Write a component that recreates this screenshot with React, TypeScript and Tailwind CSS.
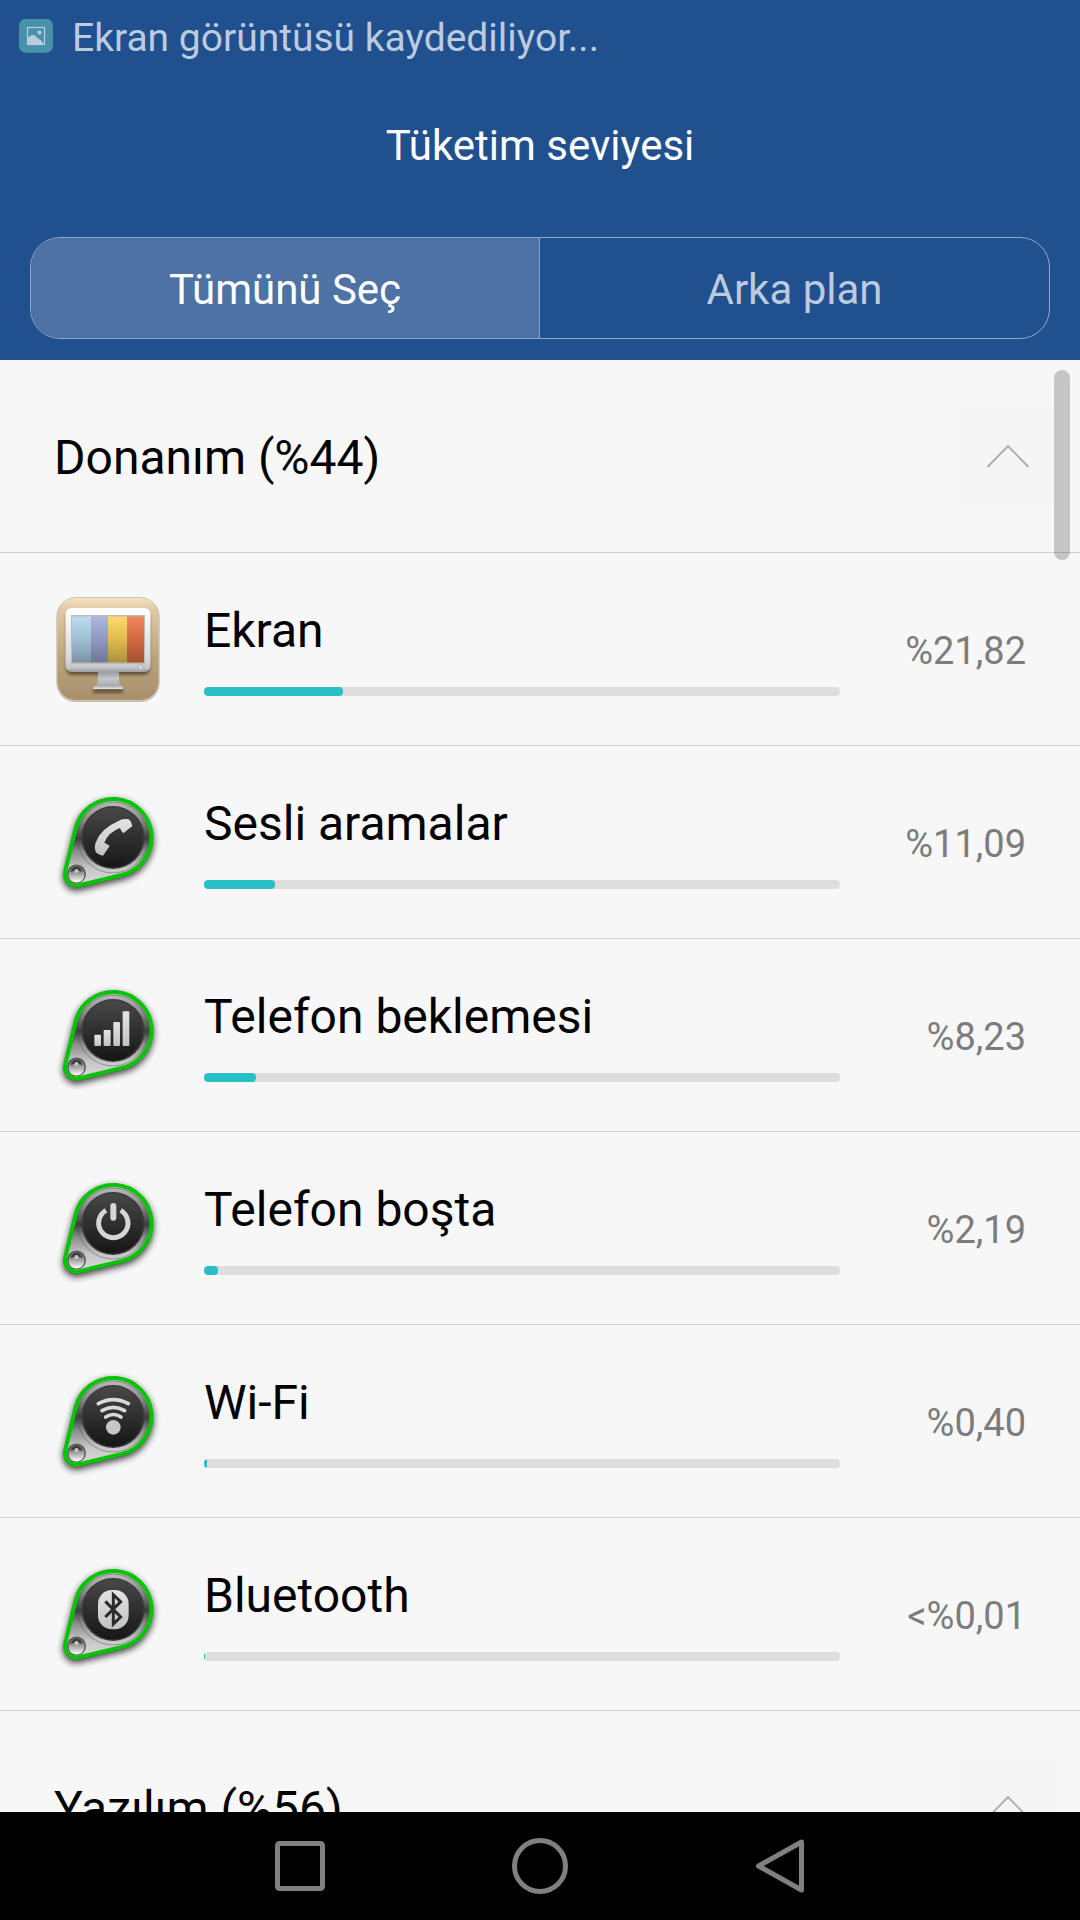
import React, { useState } from "react";

type Glyph = "screen" | "phone" | "signal" | "power" | "wifi" | "bluetooth";

interface Item {
  icon: Glyph;
  label: string;
  value: string;
  percent: number;
}

const items: Item[] = [
  { icon: "screen", label: "Ekran", value: "%21,82", percent: 21.82 },
  { icon: "phone", label: "Sesli aramalar", value: "%11,09", percent: 11.09 },
  { icon: "signal", label: "Telefon beklemesi", value: "%8,23", percent: 8.23 },
  { icon: "power", label: "Telefon boşta", value: "%2,19", percent: 2.19 },
  { icon: "wifi", label: "Wi-Fi", value: "%0,40", percent: 0.4 },
  { icon: "bluetooth", label: "Bluetooth", value: "<%0,01", percent: 0.01 },
];

function ScreenIcon() {
  return (
    <svg viewBox="0 0 104 104" className="size-[104px] shrink-0 overflow-visible" aria-hidden="true">
      <defs>
        <linearGradient id="tan" x1="0" y1="0" x2="0" y2="1">
          <stop offset="0" stopColor="#f6e4c0" />
          <stop offset="0.12" stopColor="#dfcaa4" />
          <stop offset="0.6" stopColor="#baa27c" />
          <stop offset="1" stopColor="#a8906b" />
        </linearGradient>
        <linearGradient id="frame" x1="0" y1="0" x2="0" y2="1">
          <stop offset="0" stopColor="#ffffff" />
          <stop offset="0.8" stopColor="#d6d7da" />
          <stop offset="0.93" stopColor="#c4c5c8" />
          <stop offset="1" stopColor="#9c9da0" />
        </linearGradient>
        <linearGradient id="shade" x1="0" y1="0" x2="0" y2="1">
          <stop offset="0" stopColor="#fff" stopOpacity="0.12" />
          <stop offset="0.5" stopColor="#000" stopOpacity="0.12" />
          <stop offset="1" stopColor="#000" stopOpacity="0.32" />
        </linearGradient>
        <linearGradient id="stand" x1="0" y1="0" x2="0" y2="1">
          <stop offset="0" stopColor="#9a9b9e" />
          <stop offset="0.4" stopColor="#c6c7ca" />
          <stop offset="0.8" stopColor="#a9aaad" />
          <stop offset="1" stopColor="#e6e6e8" />
        </linearGradient>
        <filter id="soft" x="-20%" y="-20%" width="140%" height="150%">
          <feGaussianBlur stdDeviation="1.5" />
        </filter>
      </defs>
      <rect x="0.5" y="1" width="103" height="104" rx="19" fill="#9b9487" opacity="0.6" />
      <rect x="1" y="0.5" width="102" height="103" rx="19" fill="url(#tan)" stroke="#cfc5b3" strokeWidth="1" />
      <rect x="10" y="15" width="84" height="63" rx="6" fill="#4b3e2b" opacity="0.75" filter="url(#soft)" />
      <path d="M37 92h30v4H37z" fill="#4b3e2b" opacity="0.75" filter="url(#soft)" />
      <path d="M42 75h21v8q0 4 4 7v2H37v-2q5-3 5-7z" fill="url(#stand)" />
      <rect x="9.500" y="11" width="85" height="64" rx="6" fill="url(#frame)" />
      <rect x="15" y="18" width="74" height="49" fill="#b9bbbf" />
      <rect x="16" y="19.500" width="19" height="46" fill="#b4d8ee" />
      <rect x="35" y="19.500" width="17" height="46" fill="#a3addb" />
      <rect x="52" y="19.500" width="19" height="46" fill="#fdd45b" />
      <rect x="71" y="19.500" width="17" height="46" fill="#f07747" />
      <rect x="16" y="19.500" width="72" height="46" fill="url(#shade)" />
      <circle cx="84.500" cy="70" r="2.500" fill="#d9d9db" stroke="#a9aaad" strokeWidth="0.800" />
    </svg>
  );
}

function BadgeGlyph({ icon }: { icon: Glyph }) {
  if (icon === "phone") {
    return (
      <path
        transform="translate(-6 -10) scale(0.3333)"
        d="M204 124Q218 114 236 118Q242 120 247 138L220 160Q214 155 210 144Q176 156 163 188Q172 192 179 198L159 227Q142 223 137 215Q132 200 137 188Q152 146 204 124Z"
        fill="url(#light)"
      />
    );
  }
  if (icon === "signal") {
    return (
      <g transform="translate(-6 -13) scale(0.3333)" fill="url(#light)">
        <rect x="133" y="194" width="20" height="34" rx="3" />
        <rect x="161" y="180" width="21" height="48" rx="3" />
        <rect x="190" y="156" width="20" height="72" rx="3" />
        <rect x="218" y="124" width="20" height="104" rx="3" />
      </g>
    );
  }
  if (icon === "power") {
    return (
      <g transform="translate(-6 -11) scale(0.3333)" fill="none" stroke="#d6d6d6">
        <path d="M168 136A44 44 0 1 0 212 136" strokeWidth="15" />
        <path d="M190 123V158" strokeWidth="18" strokeLinecap="round" />
      </g>
    );
  }
  if (icon === "wifi") {
    return (
      <g transform="translate(-6 -9) scale(0.3333)" fill="none" stroke="#dadada" strokeWidth="11" strokeLinecap="round">
        <path d="M145 131Q190 107 235 131" />
        <path d="M156 152Q190 132 224 152" />
        <path d="M167 171Q190 156 213 171" />
        <circle cx="190" cy="202" r="22" fill="#c6c6c6" stroke="none" />
      </g>
    );
  }
  return (
    <g transform="translate(-6 -12) scale(0.3333)">
      <rect x="144" y="120" width="92" height="118" rx="42" fill="url(#light)" />
      <path d="M166 154L212 201L190 222V134L212 155L166 201" fill="none" stroke="#2b2b2b" strokeWidth="9" />
    </g>
  );
}

const drop = "M19.600 38.600A38.500 38.500 0 1 1 65.900 84.900L23.200 95.200A11.500 11.500 0 0 1 9.300 81.300Z";

function BadgeIcon({ icon }: { icon: Glyph }) {
  return (
    <svg viewBox="0 0 104 104" className="size-[104px] shrink-0 overflow-visible" aria-hidden="true">
      <defs>
        <linearGradient id="metal" x1="0" y1="8" x2="0" y2="96" gradientUnits="userSpaceOnUse">
          <stop offset="0" stopColor="#c4c4c4" />
          <stop offset="0.25" stopColor="#8c8c8c" />
          <stop offset="0.46" stopColor="#3c3c3c" />
          <stop offset="0.6" stopColor="#8a8a8a" />
          <stop offset="0.8" stopColor="#c6c6c6" />
          <stop offset="1" stopColor="#dcdcdc" />
        </linearGradient>
        <linearGradient id="disc" x1="0" y1="0" x2="0" y2="1">
          <stop offset="0" stopColor="#484848" />
          <stop offset="0.5" stopColor="#2f2f2f" />
          <stop offset="1" stopColor="#161616" />
        </linearGradient>
        <linearGradient id="light" x1="0" y1="0" x2="0" y2="1">
          <stop offset="0" stopColor="#e4e4e4" />
          <stop offset="1" stopColor="#c2c2c2" />
        </linearGradient>
        <linearGradient id="ball" x1="0" y1="0" x2="0" y2="1">
          <stop offset="0" stopColor="#5a5a5a" />
          <stop offset="0.45" stopColor="#a0a0a0" />
          <stop offset="1" stopColor="#ffffff" />
        </linearGradient>
        <filter id="glow" x="-20%" y="-20%" width="140%" height="140%">
          <feGaussianBlur stdDeviation="3" />
        </filter>
      </defs>
      <path d={drop} transform="translate(0 3)" fill="#222" stroke="#222" strokeWidth="5" opacity="0.8" filter="url(#glow)" />
      <path d={drop} fill="url(#metal)" stroke="#04c404" strokeWidth="4" strokeLinejoin="round" />
      <circle cx="57" cy="47.500" r="35.500" fill="none" stroke="#555" strokeWidth="0.800" opacity="0.6" />
      <circle cx="57" cy="47.500" r="31.500" fill="#3a3a3a" />
      <circle cx="57" cy="47.500" r="30" fill="url(#disc)" />
      <circle cx="20.500" cy="84" r="9.500" fill="#5a5a5a" />
      <circle cx="20.500" cy="84.500" r="8" fill="url(#ball)" />
      <path d="M14.500 82q2-5 6-5t6 5q-6-3-12 0" fill="#3a3a3a" />
      <circle cx="20.500" cy="81" r="2" fill="#c8c8c8" />
      <BadgeGlyph icon={icon} />
    </svg>
  );
}

function SectionHeader({ title }: { title: string }) {
  return (
    <h2 className="shrink-0 border-b border-[#cfcfcf]">
      <button type="button" className="flex h-48 w-full items-center justify-between pr-6 pl-[54px] text-left">
        <span className="pt-1 text-[48px] leading-[56px]">{title}</span>
        <span className="flex size-24 items-center justify-center bg-[#f5f5f5]">
          <svg viewBox="0 0 96 96" className="size-24" fill="none" stroke="#ababab" strokeWidth="1.800" aria-hidden="true">
            <path d="M27.500 59L48 38L68.500 59" />
          </svg>
        </span>
      </button>
    </h2>
  );
}

function UsageRow({ item }: { item: Item }) {
  return (
    <li className="flex h-[193px] items-center border-b border-[#cfcfcf] pr-[54px] pl-14">
      {item.icon === "screen" ? <ScreenIcon /> : <BadgeIcon icon={item.icon} />}
      <div className="ml-11 flex flex-1 flex-col gap-7">
        <span className="text-[48px] leading-[56px]">{item.label}</span>
        <div
          role="progressbar"
          aria-label={item.label}
          aria-valuenow={item.percent}
          aria-valuemin={0}
          aria-valuemax={100}
          className="h-[9px] overflow-hidden rounded bg-[#dddddd]"
        >
          <div className="h-full min-w-px rounded bg-[#29bfc7]" style={{ width: `${item.percent}%` }} />
        </div>
      </div>
      <span className="w-[186px] pt-1 text-right text-[38px] leading-[44px] text-[#7c7c7c]">{item.value}</span>
    </li>
  );
}

export default function App() {
  const [tab, setTab] = useState(0);
  const tabs = ["Tümünü Seç", "Arka plan"];

  return (
    <div className="flex h-screen flex-col bg-[#f7f7f7] font-['Roboto',sans-serif] text-black">
      <header className="shrink-0 bg-[#20508e] text-white">
        <div className="flex h-[72px] items-center gap-[19px] pl-[19px]">
          <svg viewBox="0 0 34 34" className="size-[34px]" aria-hidden="true">
            <rect width="34" height="34" rx="7" fill="#3f86a2" />
            <rect width="34" height="33" rx="7" fill="#4891aa" />
            <rect x="8.500" y="8.500" width="17" height="17" fill="none" stroke="#bccbdf" strokeWidth="1.200" />
            <path d="M8.500 19q3-3.500 6-3q2.500 0.500 4 3q3.500 1.500 6 5.500v1h-16z" fill="#bccbdf" />
            <circle cx="20.500" cy="13.500" r="2" fill="#bccbdf" />
          </svg>
          <span className="pt-1 text-[39px] leading-[46px] text-[#bccbdf]">Ekran görüntüsü kaydediliyor...</span>
        </div>
        <h1 className="flex h-[147px] items-center justify-center text-[42px] leading-[50px]">Tüketim seviyesi</h1>
        <div className="px-[30px] pt-[18px] pb-[21px]">
          <div role="tablist" className="grid h-[102px] grid-cols-2 overflow-hidden rounded-[30px] border border-[#90a8c7]">
            {tabs.map((name, i) => (
              <button
                key={name}
                type="button"
                role="tab"
                aria-selected={tab === i}
                onClick={() => setTab(i)}
                className={`pt-1 text-[42px] leading-[50px] ${i === 0 ? "border-r border-[#7f9bbf]" : ""} ${
                  tab === i ? "bg-[#4d73a5] text-white" : "text-[#bccbdf]"
                }`}
              >
                {name}
              </button>
            ))}
          </div>
        </div>
      </header>

      <main className="relative min-h-0 flex-1 overflow-hidden">
        <SectionHeader title="Donanım (%44)" />
        <ul>
          {items.map((item) => (
            <UsageRow key={item.icon} item={item} />
          ))}
        </ul>
        <SectionHeader title="Yazılım (%56)" />
        <div className="absolute top-2.5 right-2.5 h-[190px] w-4 rounded-full bg-black/20" />
      </main>

      <nav className="flex h-[108px] shrink-0 items-center justify-center gap-[140px] bg-black">
        <button type="button" aria-label="Son uygulamalar" className="flex w-[100px] justify-center">
          <svg viewBox="0 0 60 60" className="size-[60px]" fill="none" stroke="#808080" strokeWidth="5" aria-hidden="true">
            <rect x="7.500" y="7.500" width="45" height="45" rx="2" />
          </svg>
        </button>
        <button type="button" aria-label="Ana ekran" className="flex w-[100px] justify-center">
          <svg viewBox="0 0 60 60" className="size-[60px]" fill="none" stroke="#808080" strokeWidth="5" aria-hidden="true">
            <circle cx="30" cy="30" r="25.500" />
          </svg>
        </button>
        <button type="button" aria-label="Geri" className="flex w-[100px] justify-center">
          <svg viewBox="0 0 60 60" className="size-[60px]" fill="none" stroke="#808080" strokeWidth="5" strokeLinejoin="round" aria-hidden="true">
            <path d="M51.500 6V54L8.500 30Z" />
          </svg>
        </button>
      </nav>
    </div>
  );
}
